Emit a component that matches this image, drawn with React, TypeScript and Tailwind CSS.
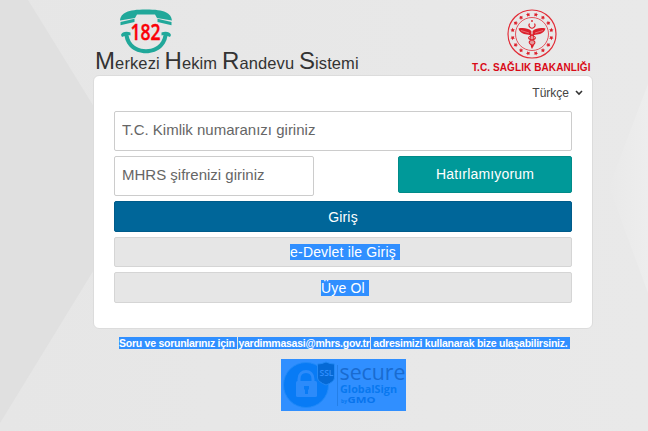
import React from "react";

function Backdrop() {
  return (
    <svg className="absolute inset-0" width="648" height="431" viewBox="0 0 648 431" aria-hidden="true">
      <defs>
        <linearGradient id="right" x1="0" y1="0" x2="1" y2="0">
          <stop offset="0" stopColor="#e9e9e9" />
          <stop offset="1" stopColor="#ededed" />
        </linearGradient>
        <linearGradient id="base" x1="0" y1="0" x2="1" y2="0">
          <stop offset="0" stopColor="#e6e6e6" />
          <stop offset="1" stopColor="#e9e9e9" />
        </linearGradient>
      </defs>
      <rect width="648" height="431" fill="url(#base)" />
      <path d="M0 0H28L144 188L0 423Z" fill="#e0e0e0" />
      <path d="M648 84L609 187L648 293Z" fill="url(#right)" />
    </svg>
  );
}

function PhoneLogo() {
  return (
    <svg className="ml-[25px] block" width="56" height="48" viewBox="0 0 56 48" aria-label="182">
      <g fill="#21a89a">
        <path d="M2 12.5C3 5 9 1.5 28 1.5S53 5 54 12.5L39 10L37 6.5H19L17 10L2 12.5Z" />
        <path d="M2.5 14L16.5 10.8L16.5 14L2.5 17.2Z" />
        <path d="M53.5 14L39.5 10.8L39.5 14L53.5 17.2Z" />
        <path d="M3 27C4 24 8 23 12.5 24.5L12.5 27.5L10.5 27C13 46 43 46 45.5 27L43.5 27.5L43.5 24.5C48 23 52 24 53 27L52 29L49.5 28C46 51 10 51 6.5 28L4 29Z" />
      </g>
      <text x="12.5" y="32" textLength="30" lengthAdjust="spacingAndGlyphs" className="fill-[#fb0007] stroke-[#fb0007] stroke-[.4] font-['Open_Sans',sans-serif] text-[21px] font-semibold">182</text>
    </svg>
  );
}

const stars = Array.from({ length: 16 }, (_, i) => i * 22.5);

function MinistryLogo() {
  return (
    <svg className="mx-auto block" width="50" height="50" viewBox="0 0 50 50" aria-hidden="true">
      <g fill="none" stroke="#e22d38">
        <circle cx="25" cy="25" r="24" strokeWidth="1.2" />
        <circle cx="25" cy="25" r="16.5" strokeWidth=".8" />
      </g>
      <g fill="#dc202b">
        {stars.map((a) => (
          <path key={a} transform={`rotate(${a + 11.25} 25 25)`} d="M25 3L25.7 4.4L27.2 4.6L26.1 5.7L26.4 7.2L25 6.5L23.6 7.2L23.9 5.7L22.8 4.6L24.3 4.4Z" />
        ))}
        <path d="M11.5 19.5C16 18.5 21 19 24.4 22V36H25.6V22C29 19 34 18.5 38.5 19.5C38 22 36 24 33 25L27 26L26 38L25 40L24 38L23 26L17 25C14 24 12 22 11.5 19.5Z" />
        <circle cx="25" cy="12" r=".9" />
      </g>
      <path d="M22.5 14.5A3 3 0 1 0 27.5 14.5" fill="none" stroke="#dc202b" strokeWidth="1.1" />
      <path d="M22 25C31 28 29 30 25 31S21 35 27 37M28 25C19 28 21 30 25 31S29 35 24 37" fill="none" stroke="#dc202b" strokeWidth="1.1" />
      <path d="M14 21.5L22 24M36 21.5L28 24" stroke="#eca5aa" strokeWidth=".6" />
    </svg>
  );
}

function SecureSeal() {
  return (
    <svg className="mx-auto mt-[10px] block" width="125" height="52" viewBox="0 0 125 52">
      <rect width="125" height="52" fill="#308fff" />
      <circle cx="25" cy="26" r="22.5" fill="#087bf5" stroke="#218af9" />
      <path d="M18 24V20C18 10 32 10 32 20V24" fill="none" stroke="#2c8bfa" strokeWidth="3" />
      <rect x="15" y="22" width="21" height="16" rx="1.5" fill="#2c8bfa" />
      <path d="M23 27H28V30L27 31V35H24V31L23 30Z" fill="#087bf5" />
      <path d="M36.5 5Q41 5 45 3Q49 5 53.5 5V19Q53 23 45 26Q37 23 36.5 19Z" fill="#0569d5" stroke="#2389f5" />
      <text x="38.5" y="16.5" textLength="14" lengthAdjust="spacingAndGlyphs" className="fill-[#308fff] font-['Open_Sans',sans-serif] text-[9px] font-semibold">SSL</text>
      <path d="M56.5 6V47" stroke="#247fe8" strokeWidth="1" />
      <text x="58.5" y="21" textLength="66" lengthAdjust="spacingAndGlyphs" className="fill-[#196bd0] font-['Open_Sans',sans-serif] text-[22px]">secure</text>
      <text x="59" y="34" textLength="57" lengthAdjust="spacingAndGlyphs" className="fill-[#0878ef] font-['Open_Sans',sans-serif] text-[10.5px] font-bold">GlobalSign</text>
      <text x="60" y="43.5" textLength="6" lengthAdjust="spacingAndGlyphs" className="fill-[#0878ef] font-['Open_Sans',sans-serif] text-[6px] font-bold">by</text>
      <text x="66.5" y="43.5" textLength="28" lengthAdjust="spacingAndGlyphs" className="fill-[#0874ed] font-['Open_Sans',sans-serif] text-[8px] font-bold">GMO</text>
    </svg>
  );
}

export default function App() {
  return (
    <div className="relative h-[431px] w-[648px] overflow-hidden bg-[#e7e7e7] font-['Liberation_Sans',Arial,sans-serif]">
      <Backdrop />
      <main className="relative ml-[93px] w-[500px]">
        <header className="flex h-[75px] justify-between pt-2">
          <div>
            <PhoneLogo />
            <h1 className="-mt-[7px] ml-[2px] whitespace-nowrap text-[16.5px] leading-[24px] tracking-[0.11px] text-[#333]">
              <span className="text-[24px]">M</span>erkezi <span className="text-[24px]">H</span>ekim <span className="text-[24px]">R</span>andevu <span className="text-[24px]">S</span>istemi
            </h1>
          </div>
          <div className="mr-px w-[120px] pt-px">
            <MinistryLogo />
            <p className="mt-[3px] whitespace-nowrap text-[10px] font-bold leading-[12px] tracking-[0.09px] text-[#d90a17]">T.C. SAĞLIK BAKANLIĞI</p>
          </div>
        </header>
        <section className="h-[254px] rounded-[6px] border border-[#dcdcdc] bg-white px-5 pt-[7px]">
          <div className="-mr-[11px] flex h-[20px] items-center justify-end gap-[6px] text-[12px] text-[#444]">
            <span>Türkçe</span>
            <svg width="8" height="6" viewBox="0 0 8 6"><path d="M1 1L4 4L7 1" fill="none" stroke="#333" strokeWidth="1.6" /></svg>
          </div>
          <form className="mt-2 flex flex-col gap-[5px] text-[14px] tracking-[0.17px]">
            <input className="h-[40px] w-full rounded-[2px] border border-[#ccc] px-[7px] pb-[3px] text-[15px] tracking-normal placeholder:text-[#666]" placeholder="T.C. Kimlik numaranızı giriniz" />
            <div className="flex items-start justify-between">
              <input className="h-[40px] w-[200px] rounded-[2px] border border-[#ccc] px-[7px] pb-[3px] text-[15px] tracking-normal placeholder:text-[#666]" placeholder="MHRS şifrenizi giriniz" />
              <button type="button" className="h-[37px] w-[174px] rounded-[2px] border border-[#008b88] bg-[#009999] text-white">Hatırlamıyorum</button>
            </div>
            <button type="button" className="h-[31px] rounded-[2px] border border-[#005b8a] bg-[#006699] pt-px text-white">Giriş</button>
            <button type="button" className="flex h-[30px] items-center justify-center rounded-[2px] border border-[#d5d5d5] bg-[#e6e6e6] pl-[4px] text-white"><span className="whitespace-pre bg-[#308fff] leading-[16px]">e-Devlet ile Giriş </span></button>
            <button type="button" className="flex h-[31px] items-center justify-center rounded-[2px] border border-[#d5d5d5] bg-[#e6e6e6] pl-[4px] text-white"><span className="whitespace-pre bg-[#308fff] leading-[16px]">Üye Ol </span></button>
          </form>
        </section>
        <footer className="pt-[8px]">
          <p className="ml-[26px] flex h-[12px] w-[451px] whitespace-pre bg-[#308fff] text-[10.5px] font-bold leading-[12px] tracking-[-0.25px] text-white">
            <span>Soru ve sorunlarınız için </span><span className="border-x border-[#e7e7e7]">yardimmasasi@mhrs.gov.tr</span><span> adresimizi kullanarak bize ulaşabilirsiniz.</span>
          </p>
          <SecureSeal />
        </footer>
      </main>
    </div>
  );
}
